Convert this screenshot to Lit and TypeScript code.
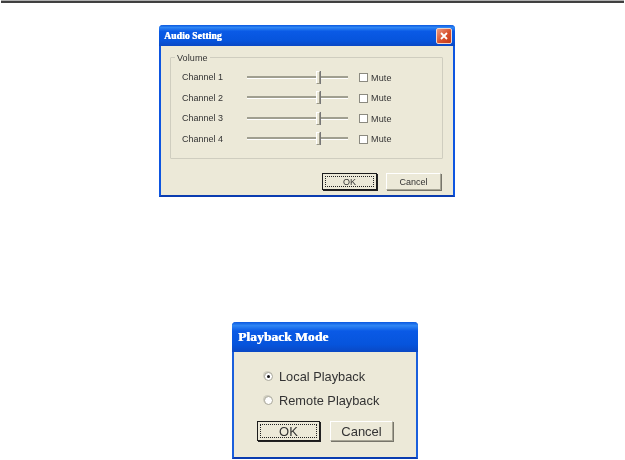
import { LitElement, html, css, svg } from "lit";
import { customElement } from "lit/decorators.js";

@customElement("app-root")
export class AppRoot extends LitElement {
  static styles = css`
    :host { display: block; width: 625px; height: 460px; background: #fff; overflow: hidden; font-family: "Liberation Sans", Arial, sans-serif; color: #333; }
    .rule { height: 3px; margin: 0 1px; box-sizing: border-box; background: linear-gradient(#b0b0b0 0, #b0b0b0 33%, #3c3c3c 34%, #444 100%); }
    .dlg { box-sizing: border-box; background: #ece9d8; display: flex; flex-direction: column; border: 2px solid #0d55e0; border-top: 0; border-bottom-color: #0a3cb0; border-radius: 4px 4px 0 0; filter: blur(0.4px); }
    .audio { width: 296px; height: 172px; margin: 22px 0 0 159px; }
    .play { width: 186px; height: 137px; margin: 125px 0 0 232px; border-color: #1a5fdc; border-bottom-color: #0a3cb0; }
    .title { flex: none; margin: 0 -2px; display: flex; align-items: center; justify-content: space-between; color: #fff; font-family: "Liberation Serif", serif; font-weight: bold; background: linear-gradient(#0a58e0 0, #2f86f4 12%, #0a5ae6 30%, #0654dc 75%, #0a48c4 100%); border-radius: 4px 4px 0 0; text-shadow: .5px 0 0 #fff; }
    .audio .title { height: 21px; padding: 0 3px 0 5px; font-size: 9.5px; letter-spacing: .15px; }
    .play .title { height: 30px; padding: 0 5px 0 6px; font-size: 13.5px; letter-spacing: .05px; }
    .close { width: 14px; height: 14px; border: 1px solid #f3d5c8; border-radius: 2px; background: linear-gradient(135deg, #ec9a80, #d8502c 55%, #c43a18); display: flex; }
    .close svg { width: 14px; height: 14px; }
    .group { position: relative; box-sizing: border-box; margin: 11px 10px 0 9px; height: 102px; border: 1px solid #cfcdbf; border-radius: 1px; padding: 9px 0 0 11px; display: flex; flex-direction: column; font-size: 9px; }
    .legend { position: absolute; left: 4px; top: -5px; background: #ece9d8; padding: 0 2px; font-size: 9px; line-height: 10px; letter-spacing: .1px; }
    .row { display: flex; align-items: center; height: 20.5px; }
    .name { width: 65px; }
    .slider { position: relative; width: 101px; height: 2px; background: #a09f90; border-bottom: 1px solid #fff; margin-right: 11px; }
    .thumb { position: absolute; left: 69px; top: -5px; width: 2px; height: 11px; background: #ece9d8; border: 1px solid #9a9888; border-left-color: #fff; border-top-color: #fff; box-shadow: 1px 0 0 #777; }
    .check { width: 7px; height: 7px; background: #fff; border: 1px solid #8b8a80; margin: 1px 3px 0 0; }
    .mute { margin-top: 1px; letter-spacing: .15px; }
    .actions { display: flex; }
    .audio .actions { margin: 14px 0 0 161px; gap: 9px; }
    .play .actions { margin: 0 0 0 23px; gap: 10px; }
    .btn { box-sizing: border-box; display: flex; align-items: center; justify-content: center; background: #ece9d8; border: 1px solid; border-color: #fff #a8a696 #a8a696 #fff; box-shadow: 1px 1px 0 #77756a; }
    .btn.def { border-color: #1c1c1c; box-shadow: 1px 1px 0 #222; position: relative; }
    .btn.def::after { content: ""; position: absolute; inset: 2px; border: 1px dotted #222; }
    .audio .btn { width: 55px; height: 17px; font-size: 9px; }
    .play .btn { width: 63px; height: 20px; font-size: 13px; }
    .modes { margin: 14px 0 0 30px; height: 50px; font-size: 12.8px; display: flex; flex-direction: column; gap: 4px; }
    .mode { display: flex; align-items: center; height: 20px; gap: 6px; }
    .radio { width: 9px; height: 9px; box-sizing: border-box; border-radius: 50%; background: #fff; border: 1px solid #a8a698; display: flex; align-items: center; justify-content: center; box-shadow: -1px -1px 0 #d0cec0; }
    .dot { width: 3px; height: 3px; border-radius: 50%; background: #111; }
    .spacer { height: 5px; }
  `;

  private cross() {
    return html`<svg viewBox="0 0 14 14">${svg`<path d="M4 4 L10 10 M10 4 L4 10" stroke="#fff" stroke-width="1.8" fill="none"/>`}</svg>`;
  }

  render() {
    return html`
      <div class="rule"></div>
      <div class="dlg audio">
        <div class="title"><span>Audio Setting</span><span class="close">${this.cross()}</span></div>
        <div class="group">
          <span class="legend">Volume</span>
          ${[1, 2, 3, 4].map(
            (n) => html`<div class="row">
              <span class="name">Channel ${n}</span>
              <span class="slider"><span class="thumb"></span></span>
              <span class="check"></span><span class="mute">Mute</span>
            </div>`
          )}
        </div>
        <div class="actions">
          <div class="btn def">OK</div>
          <div class="btn">Cancel</div>
        </div>
      </div>
      <div class="dlg play">
        <div class="title"><span>Playback Mode</span></div>
        <div class="modes">
          <div class="mode"><span class="radio"><span class="dot"></span></span>Local Playback</div>
          <div class="mode"><span class="radio"></span>Remote Playback</div>
        </div>
        <div class="spacer"></div>
        <div class="actions">
          <div class="btn def">OK</div>
          <div class="btn">Cancel</div>
        </div>
      </div>
    `;
  }
}
